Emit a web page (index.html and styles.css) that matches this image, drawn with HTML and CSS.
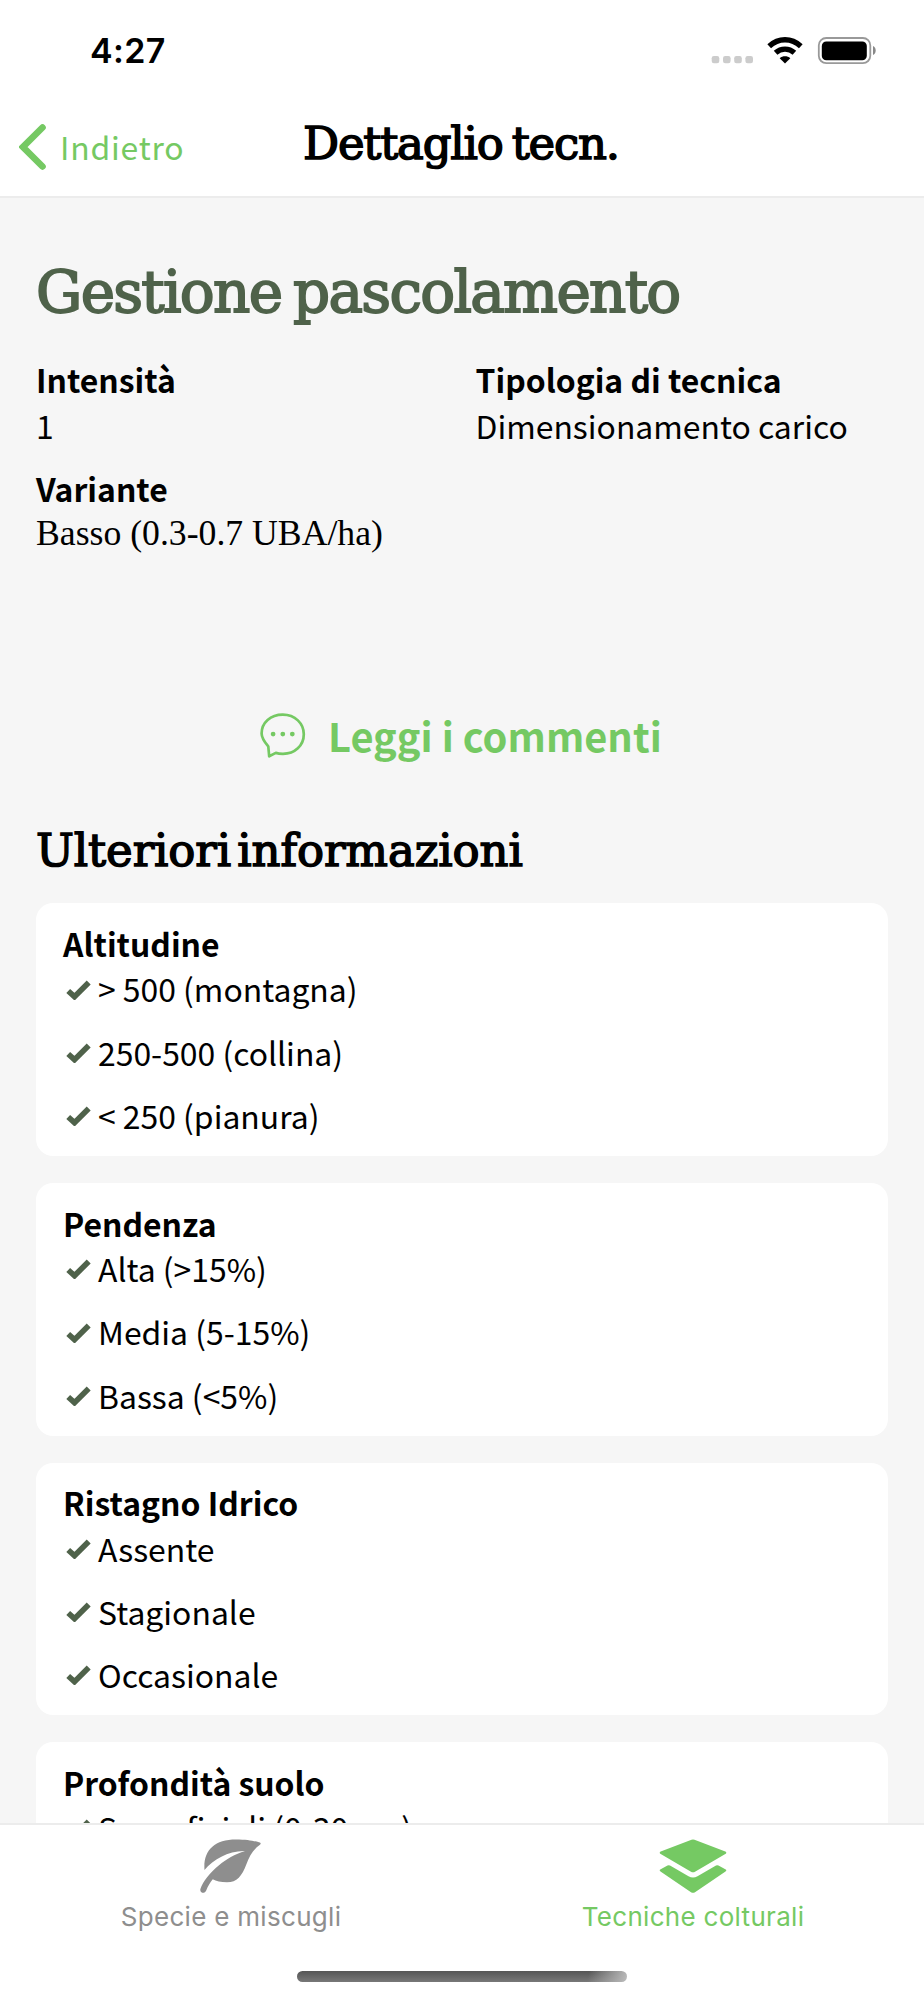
FILE: index.html
```html
<!DOCTYPE html>
<html lang="it">
<head>
<meta charset="utf-8">
<title>Dettaglio tecn.</title>
<link rel="stylesheet" href="styles.css">
</head>
<body>
<svg class="defs" width="0" height="0"><symbol id="check" viewBox="0 0 26 21"><path d="M2.2 12L8.500 17.700L22.700 3.500" fill="none" stroke="#4f624a" stroke-width="5.6"/></symbol></svg>
<div class="screen">
  <header class="top">
    <div class="status">
      <span class="time">4:27</span>
      <svg class="status-icons" viewBox="0 0 166 30" width="166" height="30">
        <g fill="#ccc"><rect x="1.7" y="21" width="7.6" height="7.3" rx="2.2"/><rect x="13" y="21" width="7.6" height="7.3" rx="2.2"/><rect x="24.2" y="21" width="7.6" height="7.3" rx="2.2"/><rect x="35.4" y="21" width="7.6" height="7.3" rx="2.2"/></g>
        <g fill="none" stroke="#000" stroke-width="5.4"><path d="M59.2 11.2C68.5 2.6 81.500 2.600 90.800 11.200"/><path d="M65.600 17.800C71 12.900 79 12.900 84.400 17.800"/></g>
        <path d="M75 28.500L69.700 23.200C72.600 20.700 77.400 20.700 80.300 23.200Z"/>
        <rect x="108.800" y="3" width="51.500" height="25.200" rx="7.500" fill="none" stroke="#999" stroke-width="1.800"/>
        <rect x="111.800" y="6.500" width="45" height="18.700" rx="4.500"/>
        <path d="M163 11C166.600 12.500 166.600 18.500 163 20Z" fill="#888"/>
      </svg>
    </div>
    <nav class="nav">
      <a class="back"><svg viewBox="0 0 28 46" width="28" height="46"><path d="M23.500 3.500L4 23L23.500 42.500" fill="none" stroke="#75c963" stroke-width="6.600" stroke-linecap="round"/></svg><span>Indietro</span></a>
      <h1 class="nav-title">Dettaglio tecn.</h1>
    </nav>
  </header>
  <main class="content">
    <h2 class="title">Gestione pascolamento</h2>
    <dl class="facts">
      <div><dt>Intensità</dt><dd>1</dd></div>
      <div><dt>Tipologia di tecnica</dt><dd>Dimensionamento carico</dd></div>
      <div><dt>Variante</dt><dd class="serif">Basso (0.3-0.7 UBA/ha)</dd></div>
    </dl>
    <a class="comments">
      <svg viewBox="0 0 46 46" width="46" height="46"><path d="M8.300 33.500C5 29.500 1.600 25.500 1.600 20.500C1.600 9.800 10.500 1.600 22.800 1.600C35 1.600 43.800 10.500 43.800 21.200C43.800 32.500 34.800 40.800 23 40.800C20.500 40.800 18 40.600 15.800 39.900L9.200 43.300Z" fill="none" stroke="#75c963" stroke-width="2.700" stroke-linejoin="round"/><g fill="#75c963"><circle cx="13.100" cy="21.100" r="2.400"/><circle cx="22.800" cy="21.100" r="2.400"/><circle cx="32.300" cy="21.100" r="2.400"/></g></svg>
      <span>Leggi i commenti</span>
    </a>
    <h3 class="section">Ulteriori informazioni</h3>
    <div class="cards">
      <section class="card"><h4>Altitudine</h4><ul>
        <li><svg class="check"><use href="#check"/></svg>&gt; 500 (montagna)</li>
        <li><svg class="check"><use href="#check"/></svg>250-500 (collina)</li>
        <li><svg class="check"><use href="#check"/></svg>&lt; 250 (pianura)</li></ul></section>
      <section class="card"><h4>Pendenza</h4><ul>
        <li><svg class="check"><use href="#check"/></svg>Alta (&gt;15%)</li>
        <li><svg class="check"><use href="#check"/></svg>Media (5-15%)</li>
        <li><svg class="check"><use href="#check"/></svg>Bassa (&lt;5%)</li></ul></section>
      <section class="card"><h4>Ristagno Idrico</h4><ul>
        <li><svg class="check"><use href="#check"/></svg>Assente</li>
        <li><svg class="check"><use href="#check"/></svg>Stagionale</li>
        <li><svg class="check"><use href="#check"/></svg>Occasionale</li></ul></section>
      <section class="card"><h4>Profondità suolo</h4><ul>
        <li><svg class="check"><use href="#check"/></svg>Superficiali (0-30 cm)</li></ul></section>
    </div>
  </main>
  <footer class="bottom">
    <div class="tabs">
      <a class="tab"><svg viewBox="0 0 62 55" width="62" height="55"><path fill="#8e8e8e" d="M4.500 31C3 12 14 .5 36 .5C47 .5 54 2 59 3.200C60.800 3.700 61.300 4.700 60 5.700C53 10.500 49.500 17 46.500 25C42 37 37 43.300 27 43.300C21 43.300 16 42 12.800 40.200C10 43.500 8 47 6.200 51.500C4.500 55.500-.5 53.800.4 50C3 42 10 33.500 19 26.200C26 20.500 35 15 45 12C29 11.500 13 20.500 4.500 31Z"/></svg><span>Specie e miscugli</span></a>
      <a class="tab active"><svg viewBox="0 0 68 55" width="68" height="55"><path fill="#75c963" d="M32.500.7Q34 .1 35.500.7L66.300 12.600Q68.300 13.500 66.300 15L36 32.700Q34 33.900 32 32.700L1.700 15Q-.3 13.500 1.700 12.600ZM1.700 30.200L8.500 26.600Q9.700 25.900 11 26.600L29.500 37.300Q34 39.800 38.500 37.300L57 26.600Q58.300 25.900 59.500 26.600L66.300 30.200Q68.300 31.100 66.500 32.500L36 53.200Q34 54.400 32 53.200L1.500 32.500Q-.3 31.100 1.700 30.200Z"/></svg><span>Tecniche colturali</span></a>
    </div>
    <div class="home"></div>
  </footer>
</div>
</body>
</html>
```
FILE: styles.css
```css
* { box-sizing: border-box; margin: 0; padding: 0; }
body { background: #f6f6f6; color: #000; font: 31.900px/45.400px "Noto Sans CJK SC", "Noto Sans", sans-serif; }
svg { display: block; flex: none; }
.defs { position: absolute; }
.screen { width: 924px; height: 2000px; display: flex; flex-direction: column; overflow: hidden; }
.top { height: 198px; flex: none; background: #fff; border-bottom: 2px solid #ececec; }
.status { height: 98px; display: flex; justify-content: space-between; align-items: flex-start; padding: 30px 48px 0 90px; }
.time { font: 600 34px/42px Inter, sans-serif; letter-spacing: .400px; }
.status-icons { margin-top: 5px; }
.nav { height: 98px; display: grid; grid-template-columns: 300px 1fr 302px; }
.back { display: flex; align-items: flex-start; padding: 26px 0 0 19px; color: #75c963; }
.back span { margin: 0 0 0 13px; letter-spacing: .800px; }
.nav-title, .title, .section { font-family: "DejaVu Serif", serif; font-weight: 400; white-space: nowrap; -webkit-text-stroke: 1.500px currentColor; }
.nav-title { font-size: 45px; line-height: 54px; padding-top: 19px; letter-spacing: -1.200px; word-spacing: -4px; text-align: center; }
.content { flex: 1; min-height: 0; overflow: hidden; padding: 59px 36px 0; }
.title { font-size: 58px; line-height: 70px; color: #4f624a; letter-spacing: -1.700px; word-spacing: -5px; -webkit-text-stroke-width: 1.800px; }
.facts { display: grid; grid-template-columns: 439.500px 1fr; row-gap: 17.800px; margin-top: 30.300px; }
.facts dt, .card h4 { font-size: 31.900px; font-weight: 700; }
.serif { font: 35.700px/42px "Liberation Serif", serif; padding-top: 1px; }
.comments { display: flex; align-items: center; gap: 22px; margin: 152px 0 0 224px; color: #75c963; font-size: 39.800px; line-height: 58px; font-weight: 700; }
.comments svg { margin-top: 2px; }
.section { font-size: 45px; line-height: 54px; margin-top: 59.500px; letter-spacing: -.100px; word-spacing: -8px; }
.cards { display: flex; flex-direction: column; gap: 26.900px; margin-top: 25.500px; }
.card { height: 252.800px; flex: none; background: #fff; border-radius: 17px; padding: 17.600px 27px 0; }
.card ul { list-style: none; display: flex; flex-direction: column; gap: 17.900px; }
.card li { display: flex; align-items: center; gap: 6px; }
.check { width: 26px; height: 21px; margin-left: 3px; }
.bottom { height: 177px; flex: none; background: #fff; border-top: 2px solid #ececec; display: flex; flex-direction: column; }
.tabs { display: grid; grid-template-columns: 1fr 1fr; padding-top: 14px; height: 146px; }
.tab { display: flex; flex-direction: column; align-items: center; color: #8e8e8e; font: 26px/32px Inter, sans-serif; letter-spacing: .3px; }
.tab span { margin-top: 7px; }
.active { color: #75c963; }
.home { width: 330px; height: 11px; margin: 0 auto; border-radius: 6px; background: linear-gradient(100deg, transparent 88%, #bbb), linear-gradient(#555, #787878); }
```
